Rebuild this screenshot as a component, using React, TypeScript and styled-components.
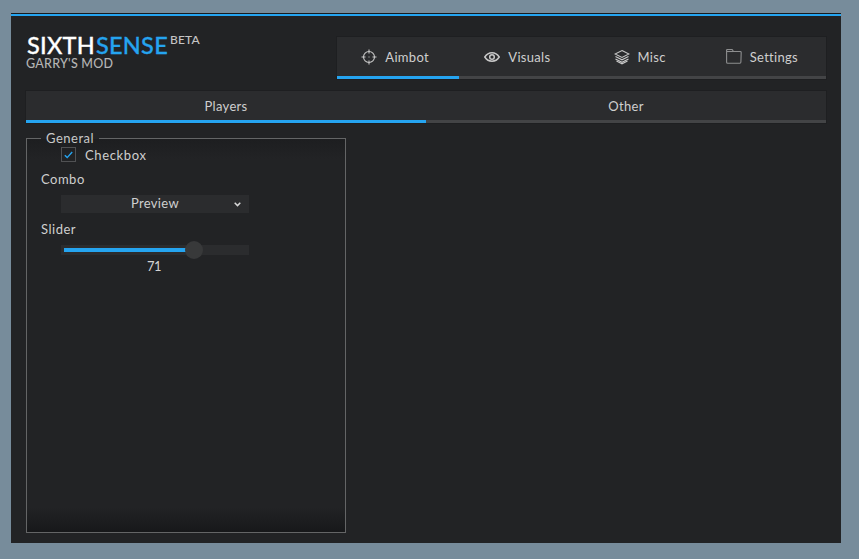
import React from "react";
import styled, { createGlobalStyle } from "styled-components";

const Global = createGlobalStyle`
  html, body { margin: 0; padding: 0; height: 100%; background: #778c9b; overflow: hidden; }
  body { font-family: "Lato", "Liberation Sans", sans-serif; }
  #root { height: 100%; }
`;

const Page = styled.div`
  width: 859px;
  height: 559px;
  padding: 13px 18px 16px 11px;
  box-sizing: border-box;
`;

const Win = styled.div`
  height: 530px;
  box-sizing: border-box;
  background: #222325;
  border-top: 1px solid #1a1b1d;
  display: flex;
  flex-direction: column;
`;

const TopLine = styled.div`
  height: 2px;
  background: #25a4f0;
`;

const Header = styled.div`
  display: flex;
  justify-content: space-between;
  padding: 21px 15px 12px 15px;
  height: 75px;
  box-sizing: border-box;
`;

const Logo = styled.div`
  display: flex;
  flex-direction: column;
  margin-top: -3px;
  margin-left: 1px;
`;

const LogoTop = styled.div`
  display: flex;
  align-items: flex-start;
  height: 23px;
  font-size: 23.5px;
  line-height: 23px;
  letter-spacing: 0.25px;
  color: #fff;
  font-weight: 500;
  -webkit-text-stroke: 0.3px currentColor;
`;

const Accent = styled.span`
  color: #25a4f0;
  margin-left: 1px;
`;

const Beta = styled.span`
  font-size: 12px;
  line-height: 12px;
  color: #c4c4c4;
  margin: 0 0 0 2px;
  letter-spacing: 0.2px;
  -webkit-text-stroke: 0;
`;

const Game = styled.div`
  font-size: 12.5px;
  line-height: 12px;
  margin: 1px 0 0 -1px;
  color: #b4b4b4;
  letter-spacing: 0.25px;
  font-weight: 500;
`;

const MainTabs = styled.div`
  width: 489px;
  height: 42px;
  display: grid;
  grid-template-columns: repeat(4, 1fr);
  background: #2b2c2e;
  box-shadow: 0 0 0 1px #1e1f21;
`;

const TabBtn = styled.div<{ $active?: boolean }>`
  display: flex;
  align-items: center;
  justify-content: center;
  gap: 8px;
  padding-right: 6px;
  font-size: 13px;
  letter-spacing: 0.3px;
  color: #cfcfcf;
  border-bottom: 3px solid ${(p) => (p.$active ? "#25a4f0" : "#434446")};
  svg { flex: none; color: #c8c8c8; }
`;

const SubTabs = styled.div`
  margin: 0 15px;
  height: 32px;
  display: grid;
  grid-template-columns: 1fr 1fr;
  background: #2b2c2e;
  box-shadow: 0 0 0 1px #1e1f21;
`;

const SubBtn = styled.div<{ $active?: boolean }>`
  display: flex;
  align-items: center;
  justify-content: center;
  font-size: 13px;
  letter-spacing: 0.3px;
  color: #cfcfcf;
  border-bottom: 3px solid ${(p) => (p.$active ? "#25a4f0" : "#434446")};
`;

const Group = styled.fieldset`
  margin: 9px 0 0 15px;
  padding: 0;
  width: 320px;
  height: 401px;
  box-sizing: border-box;
  border: 1px solid #646566;
  border-radius: 0;
  background: linear-gradient(to bottom, #1d1e20 0, #222325 20px, #222325 368px, #17181a 100%);
  background-clip: padding-box;
`;

const Legend = styled.legend`
  margin-left: 14px;
  padding: 0 5px;
  font-size: 13px;
  line-height: 13px;
  letter-spacing: 0.5px;
  color: #c8c8c8;
`;

const Body = styled.div`
  display: flex;
  flex-direction: column;
  padding: 0 0 0 14px;
  margin-top: 2px;
`;

const CheckRow = styled.div`
  display: flex;
  align-items: center;
  gap: 9px;
  margin-left: 20px;
  height: 15px;
  font-size: 13px;
  letter-spacing: 0.65px;
  color: #cfcfcf;
`;

const CheckBox = styled.span`
  width: 13px;
  height: 13px;
  border: 1px solid #505153;
  display: flex;
  align-items: center;
  justify-content: center;
  color: #25a4f0;
`;

const FieldLabel = styled.div<{ $gap: number }>`
  margin-top: ${(p) => p.$gap}px;
  height: 15px;
  font-size: 13px;
  line-height: 15px;
  letter-spacing: 0.5px;
  color: #cfcfcf;
`;

const Combo = styled.div`
  position: relative;
  margin: 8px 0 0 20px;
  width: 188px;
  height: 18px;
  padding-bottom: 2px;
  box-sizing: border-box;
  background: #2b2c2e;
  display: flex;
  align-items: center;
  justify-content: center;
  font-size: 13px;
  letter-spacing: 0.3px;
  color: #cfcfcf;
  svg { position: absolute; right: 8px; top: 7px; color: #d8d8d8; }
`;

const Track = styled.div`
  position: relative;
  margin: 8px 0 0 20px;
  width: 188px;
  height: 10px;
  background: #2b2c2e;
`;

const Fill = styled.div`
  position: absolute;
  left: 3px;
  top: 3px;
  height: 4px;
  background: #25a4f0;
`;

const Thumb = styled.div`
  position: absolute;
  top: -4px;
  width: 18px;
  height: 18px;
  border-radius: 50%;
  background: #38393a;
`;

const Value = styled.div`
  margin: 4px 0 0 20px;
  width: 186px;
  text-align: center;
  font-size: 13px;
  letter-spacing: -0.6px;
  line-height: 15px;
  color: #d4d4d4;
`;

const Stroke = { fill: "none", stroke: "currentColor", strokeWidth: 1.1 } as const;

const Crosshair = () => (
  <svg width="16" height="16" viewBox="0 0 16 16" {...Stroke}>
    <circle cx="8" cy="8" r="5.5" />
    <path d="M8 .5V4.500M8 11.500V15.500M.5 8H4.500M11.500 8H15.500" />
    <path d="M7.500 8h1" strokeWidth="1" />
  </svg>
);
const Eye = () => (
  <svg width="16" height="16" viewBox="0 0 16 16" {...Stroke} strokeWidth={1.5}>
    <path d="M.8 8C2.600 5.200 5 3.800 8 3.800s5.400 1.400 7.200 4.200c-1.800 2.800-4.200 4.200-7.200 4.200S2.600 10.800.8 8z" />
    <circle cx="8" cy="8" r="2.300" />
  </svg>
);
const Layers = () => (
  <svg width="16" height="16" viewBox="0 0 16 16" {...Stroke}>
    <path d="M8 1.500L15 5 8 8.500 1 5z" />
    <path d="M1.500 7.500L8 10.800 14.500 7.500" />
    <path d="M1.500 10L8 13.300l6.500-3.300" />
    <path d="M2.500 12L8 14.800l5.500-2.800" />
  </svg>
);
const Folder = () => (
  <svg width="16" height="15" viewBox="0 0 16 15" {...Stroke} stroke="#8d8e8f">
    <path d="M.6 13.200V1.200C.6.800.9.500 1.300.500h4.300c.5 0 .8.200 1 .6l.7 1.400h7c.5 0 .9.400.9.900l-.3 9.700c0 .6-.5 1.100-1.100 1.100H1.700c-.6 0-1.100-.4-1.100-1z" />
    <path d="M.6 2.500H7" />
  </svg>
);
const Chevron = () => (
  <svg width="7" height="5" viewBox="0 0 7 5" fill="none" stroke="currentColor" strokeWidth="1.500">
    <path d="M.7.8L3.500 3.600 6.300.8" />
  </svg>
);
const Check = () => (
  <svg width="9" height="8" viewBox="0 0 9 8" fill="none" stroke="currentColor" strokeWidth="1.400">
    <path d="M.8 4.200L3.200 6.600 8.200 1" />
  </svg>
);

const sliderValue = 71;
const trackInner = 172;

export default function App() {
  const fillWidth = (sliderValue / 100) * trackInner;
  return (
    <Page>
      <Global />
      <Win>
        <TopLine />
        <Header>
          <Logo>
            <LogoTop>
              SIXTH<Accent>SENSE</Accent>
              <Beta>BETA</Beta>
            </LogoTop>
            <Game>GARRY'S MOD</Game>
          </Logo>
          <MainTabs>
            <TabBtn $active><Crosshair />Aimbot</TabBtn>
            <TabBtn><Eye />Visuals</TabBtn>
            <TabBtn><Layers />Misc</TabBtn>
            <TabBtn><Folder />Settings</TabBtn>
          </MainTabs>
        </Header>
        <SubTabs>
          <SubBtn $active>Players</SubBtn>
          <SubBtn>Other</SubBtn>
        </SubTabs>
        <Group>
          <Legend>General</Legend>
          <Body>
            <CheckRow>
              <CheckBox><Check /></CheckBox>
              Checkbox
            </CheckRow>
            <FieldLabel $gap={10}>Combo</FieldLabel>
            <Combo>Preview<Chevron /></Combo>
            <FieldLabel $gap={9}>Slider</FieldLabel>
            <Track>
              <Fill style={{ width: fillWidth }} />
              <Thumb style={{ left: fillWidth + 2 }} />
            </Track>
            <Value>{sliderValue}</Value>
          </Body>
        </Group>
      </Win>
    </Page>
  );
}
